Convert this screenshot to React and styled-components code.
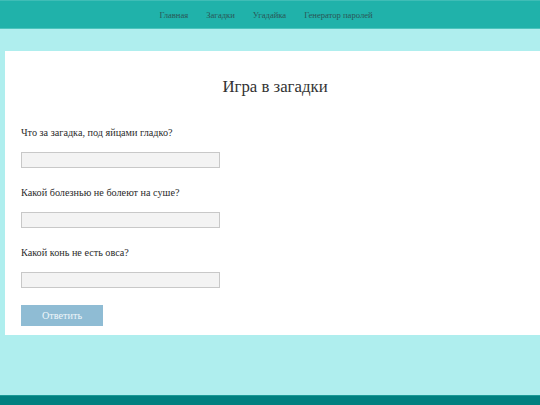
import styled, { createGlobalStyle } from "styled-components";

const questions = [
  "Что за загадка, под яйцами гладко?",
  "Какой болезнью не болеют на суше?",
  "Какой конь не есть овса?",
];

const links = ["Главная", "Загадки", "Угадайка", "Генератор паролей"];

function App() {
  return (
    <Page>
      <GlobalStyle />
      <Header>
        <Nav>
          {links.map((l) => (
            <NavLink key={l} href="#">
              {l}
            </NavLink>
          ))}
        </Nav>
      </Header>
      <Main>
        <Card>
          <Title>Игра в загадки</Title>
          <form onSubmit={(e) => e.preventDefault()}>
            {questions.map((q, i) => (
              <Field key={i}>
                <Label htmlFor={"q" + i}>{q}</Label>
                <Input type="text" id={"q" + i} />
              </Field>
            ))}
            <Button type="submit">Ответить</Button>
          </form>
        </Card>
      </Main>
      <Footer />
    </Page>
  );
}

export default App;

const GlobalStyle = createGlobalStyle`
  html, body {
    margin: 0;
    padding: 0;
    overflow: hidden;
    background: #afeeee;
    font-family: "Liberation Serif", "Times New Roman", serif;
  }
`;

const Page = styled.div`
  display: flex;
  flex-direction: column;
  height: 100vh;
`;

const Header = styled.header`
  height: 29px;
  background-color: #20b2aa;
  border-top: 1px solid #3fbdb6;
  border-bottom: 1px solid #4cc4bd;
  box-sizing: border-box;
  display: flex;
  justify-content: center;
  align-items: center;
`;

const Nav = styled.nav`
  display: flex;
  gap: 18px;
  padding-right: 8px;
`;

const NavLink = styled.a`
  color: #2a5656;
  font-size: 8.6px;
  text-decoration: none;
`;

const Main = styled.main`
  flex: 1;
  padding-top: 22px;
`;

const Card = styled.div`
  margin-left: 5px;
  width: 540px;
  background: #ffffff;
  padding: 24px 16px 9px 16px;
  box-sizing: border-box;
`;

const Title = styled.h1`
  margin: 0 0 26px 0;
  font-size: 16.8px;
  line-height: 24px;
  font-weight: 400;
  text-align: center;
  color: #333;
`;

const Field = styled.div`
  margin-bottom: 17px;
`;

const Label = styled.label`
  display: block;
  font-size: 10.2px;
  line-height: 16px;
  color: #2a2a2a;
`;

const Input = styled.input`
  display: block;
  margin-top: 11px;
  width: 199px;
  height: 16px;
  box-sizing: border-box;
  background: #f3f3f3;
  border: 1px solid #c8c8c8;
  padding: 0 4px;
  &:focus {
    outline: none;
  }
`;

const Button = styled.button`
  width: 82px;
  height: 21px;
  background: #8fbcd4;
  border: none;
  color: #eef6fa;
  font-family: "Liberation Serif", "Times New Roman", serif;
  font-size: 10.2px;
  cursor: pointer;
`;

const Footer = styled.footer`
  height: 10px;
  background: #008080;
  border-top: 1px solid #1a9a97;
  box-sizing: border-box;
`;
